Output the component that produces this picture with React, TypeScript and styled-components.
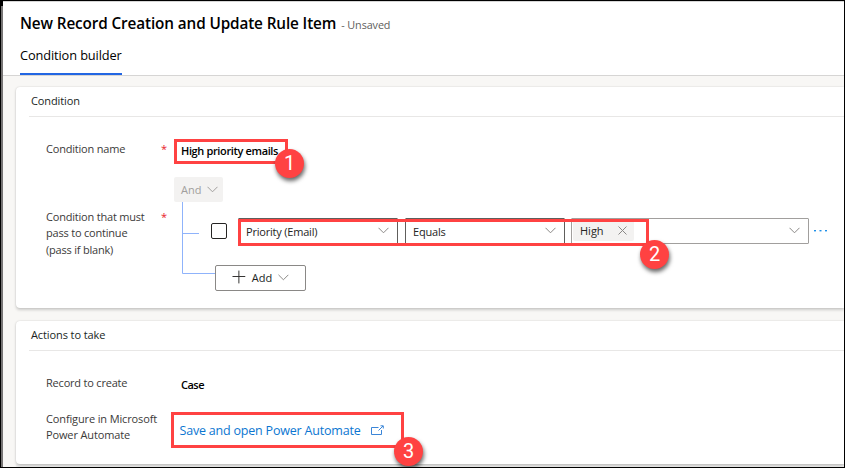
import React from 'react';
import styled, { createGlobalStyle } from 'styled-components';

const GlobalStyle = createGlobalStyle`
  * { box-sizing: border-box; }
  html, body { margin: 0; padding: 0; overflow: hidden; }
  body { font-family: "Open Sans", "Noto Sans", sans-serif; font-size: 11px; color: #323130; background: #000; }
`;

const RED = '#ff4242';

const Window = styled.div`
  position: relative;
  width: 845px;
  height: 468px;
  overflow: hidden;
  background: #000;
  padding: 1px 1px 1px 3px;
  display: flex;
  flex-direction: column;
`;

const WindowEdge = styled.div`
  position: absolute;
  left: 1px;
  top: 6px;
  bottom: 1px;
  width: 2px;
  background: #767474;
`;

const Page = styled.div`
  flex: 1;
  min-height: 0;
  display: flex;
  flex-direction: column;
  background: #f8f7f5;
  overflow: hidden;
`;

const Header = styled.header`
  height: 75px;
  flex: none;
  background: #fff;
  border-top: 1px solid #d6d6d6;
  border-bottom: 1px solid #d6d5d4;
  padding: 10px 0 0 17px;
  display: flex;
  flex-direction: column;
`;

const TitleRow = styled.div`
  height: 22px;
  display: flex;
  align-items: baseline;
  gap: 5px;
  white-space: nowrap;
`;

const Title = styled.h1`
  margin: 0;
  font-size: 15.3px;
  line-height: 22px;
  font-weight: 600;
  letter-spacing: -0.12px;
  color: #000;
`;

const Status = styled.span`
  font-size: 10.8px;
  letter-spacing: -0.1px;
  color: #605e5c;
`;

const Tab = styled.div`
  margin-top: auto;
  width: 102px;
  height: 30px;
  border-bottom: 2px solid #2266e3;
  font-size: 12.8px;
  font-weight: 500;
  letter-spacing: -0.12px;
  line-height: 21px;
  color: #000;
  white-space: nowrap;
`;

const Body = styled.main`
  flex: 1;
  min-height: 0;
  padding: 11px 0 0 13px;
  display: flex;
  flex-direction: column;
  gap: 13px;
`;

const Card = styled.section<{ $height: number }>`
  position: relative;
  flex: none;
  height: ${p => p.$height}px;
  background: #fff;
  border-radius: 4px 0 0 4px;
  box-shadow: 0 1.5px 3px rgba(0, 0, 0, 0.18), 0 0 1.5px rgba(0, 0, 0, 0.12);
  display: flex;
  flex-direction: column;
`;

const CardTitle = styled.h2`
  margin: 0 0 0 13px;
  padding-left: 2px;
  height: 30px;
  flex: none;
  border-bottom: 1px solid #e8e7e6;
  font-size: 11px;
  font-weight: 400;
  letter-spacing: -0.1px;
  line-height: 28px;
  color: #201f1e;
`;

const Field = styled.div<{ $height: number; $top: number }>`
  display: grid;
  grid-template-columns: 115px 13px 1fr;
  height: ${p => p.$height}px;
  padding: ${p => p.$top}px 0 0 30px;
`;

const Label = styled.div<{ $spacing?: number; $top?: number }>`
  padding-top: ${p => p.$top ?? 0}px;
  line-height: 16.3px;
  letter-spacing: ${p => p.$spacing ?? -0.2}px;
  color: #3b3a39;
  white-space: nowrap;
`;

const Required = styled.span<{ $top?: number }>`
  padding-top: ${p => p.$top ?? 0}px;
  line-height: 16px;
  color: #e8202a;
`;

const Value = styled.div<{ $spacing: number }>`
  padding: 2px 0 0 7px;
  font-weight: 600;
  letter-spacing: ${p => p.$spacing}px;
  line-height: 16px;
  color: #000;
  white-space: nowrap;
`;

const Builder = styled.div`
  display: flex;
  flex-direction: column;
  align-items: flex-start;
`;

const Operator = styled.button`
  width: 49px;
  height: 25px;
  border: 0;
  border-radius: 2px;
  background: #f3f2f1;
  padding: 0 5px 1px 7px;
  display: flex;
  align-items: center;
  justify-content: space-between;
  font: 11px "Open Sans", sans-serif;
  color: #a19f9d;
`;

const Tree = styled.div`
  display: grid;
  grid-template-columns: 41px 1fr;
  width: 663px;
`;

const Branches = styled.svg`
  grid-row: 1 / 3;
  display: block;
  margin-left: 8px;
`;

const Clause = styled.div`
  height: 63px;
  padding-top: 16px;
  margin-left: -4px;
  display: flex;
  align-items: flex-start;
`;

const Checkbox = styled.span`
  width: 16px;
  height: 16px;
  margin: 5px 11px 0 0;
  border: 1px solid #252423;
  border-radius: 2px;
  flex: none;
`;

const Select = styled.div<{ $width: number; $color: string; $gap: number }>`
  width: ${p => p.$width}px;
  height: 26px;
  margin-right: ${p => p.$gap}px;
  border: 1px solid ${p => p.$color};
  border-radius: 1px;
  padding: 0 8px 1px 7px;
  display: flex;
  align-items: center;
  justify-content: space-between;
  flex: none;
  letter-spacing: -0.2px;
  line-height: 16px;
  white-space: nowrap;
  color: #252423;
`;

const SelectText = styled.span`
  padding-top: 3px;
`;

const Chip = styled.span`
  width: 61px;
  height: 21px;
  margin-left: -6px;
  padding: 0 7px;
  background: #f3f2f1;
  border-radius: 2px;
  display: flex;
  align-items: center;
  justify-content: space-between;
  letter-spacing: 0;
`;

const Dots = styled.svg`
  margin-top: 11px;
  flex: none;
`;

const AddButton = styled.button`
  width: 91px;
  height: 26px;
  border: 1px solid #8a8886;
  border-radius: 2px;
  background: #fff;
  padding: 0 16px 2px;
  display: flex;
  align-items: center;
  font: 500 11px "Open Sans", sans-serif;
  color: #201f1e;
  gap: 6px;
`;

const Link = styled.a`
  display: flex;
  align-items: center;
  gap: 11px;
  height: 20px;
  margin-top: 9px;
  padding-left: 5.5px;
  font-size: 12.5px;
  letter-spacing: -0.2px;
  color: #0b76d1;
  white-space: nowrap;
`;

const Footer = styled.div`
  flex: 1;
  margin-top: -13px;
  background: #f0f0ef;
`;

const Highlight = styled.div<{ $x: number; $y: number; $w: number; $h: number }>`
  position: absolute;
  left: ${p => p.$x}px;
  top: ${p => p.$y}px;
  width: ${p => p.$w}px;
  height: ${p => p.$h}px;
  border: 3px solid ${RED};
`;

const Badge = styled.span<{ $x: number; $y: number }>`
  position: absolute;
  left: ${p => p.$x}px;
  top: ${p => p.$y}px;
  width: 29px;
  height: 29px;
  border-radius: 50%;
  background: ${RED};
  box-shadow: 1px 3px 4px rgba(0, 0, 0, 0.6);
  color: #fff;
  font: 20px/29px Roboto, sans-serif;
  text-align: center;
`;

const Chevron = ({ color = '#8a8886' }: { color?: string }) => (
  <svg width="11" height="7" viewBox="0 0 11 7" fill="none" stroke={color}>
    <path d="M0.5 0.8 L5.5 5.8 L10.5 0.8" />
  </svg>
);

export default function App() {
  return (
    <>
      <GlobalStyle />
      <Window>
        <WindowEdge />
        <Page>
          <Header>
            <TitleRow>
              <Title>New Record Creation and Update Rule Item</Title>
              <Status>- Unsaved</Status>
            </TitleRow>
            <Tab>Condition builder</Tab>
          </Header>
          <Body>
            <Card $height={221}>
              <CardTitle>Condition</CardTitle>
              <Field $height={60} $top={24}>
                <Label>Condition name</Label>
                <Required>*</Required>
                <Value $spacing={-0.36}>High priority emails</Value>
              </Field>
              <Field $height={131} $top={0}>
                <Label $top={32}>
                  Condition that must
                  <br />
                  pass to continue
                  <br />
                  (pass if blank)
                </Label>
                <Required $top={32}>*</Required>
                <Builder>
                  <Operator>
                    And
                    <Chevron color="#a19f9d" />
                  </Operator>
                  <Tree>
                    <Branches width="33" height="89" fill="none" stroke="#8fb3fb">
                      <path d="M0.5 0 V71.5 H33 M0.5 31.5 H17" />
                    </Branches>
                    <Clause>
                      <Checkbox />
                      <Select $width={160} $color="#605e5c" $gap={7}>
                        <SelectText>Priority (Email)</SelectText>
                        <Chevron />
                      </Select>
                      <Select $width={160} $color="#605e5c" $gap={6}>
                        <SelectText>Equals</SelectText>
                        <Chevron />
                      </Select>
                      <Select $width={238} $color="#a19f9d" $gap={5}>
                        <Chip>
                          High
                          <svg width="9" height="9" viewBox="0 0 9 9" stroke="#8a8886">
                            <path d="M0.5 0.5 L8.5 8.5 M8.5 0.5 L0.5 8.5" />
                          </svg>
                        </Chip>
                        <Chevron />
                      </Select>
                      <Dots width="13" height="3" fill="#1e90e8">
                        <rect x="0" y="1" width="2" height="1.4" />
                        <rect x="5.5" y="1" width="2" height="1.4" />
                        <rect x="11" y="1" width="2" height="1.4" />
                      </Dots>
                    </Clause>
                    <AddButton>
                      <svg width="14" height="14" viewBox="0 0 14 14" stroke="#323130">
                        <path d="M7 0.5 V13.5 M0.5 6.5 H13.5" />
                      </svg>
                      Add
                      <Chevron />
                    </AddButton>
                  </Tree>
                </Builder>
              </Field>
              <Highlight $x={158} $y={52} $w={114} $h={25} />
              <Badge $x={259} $y={62}>1</Badge>
              <Highlight $x={222} $y={132} $w={411} $h={27} />
              <Badge $x={624} $y={153}>2</Badge>
            </Card>
            <Card $height={143}>
              <CardTitle>Actions to take</CardTitle>
              <Field $height={60} $top={24}>
                <Label>Record to create</Label>
                <span />
                <Value $spacing={-0.5}>Case</Value>
              </Field>
              <Field $height={50} $top={0}>
                <Label $spacing={-0.13}>
                  Configure in Microsoft
                  <br />
                  Power Automate
                </Label>
                <span />
                <Link>
                  Save and open Power Automate
                  <svg width="13" height="10" viewBox="0 0 13 10" fill="none" stroke="#3b86d8">
                    <path d="M7.5 2.5 H0.5 V9.5 H10.5 V5 M7.5 5.5 L12 1 M9.5 0.8 H12.3 V3.5" />
                  </svg>
                </Link>
              </Field>
              <Highlight $x={155} $y={91} $w={233} $h={36} />
              <Badge $x={378} $y={116}>3</Badge>
            </Card>
            <Footer />
          </Body>
        </Page>
      </Window>
    </>
  );
}
